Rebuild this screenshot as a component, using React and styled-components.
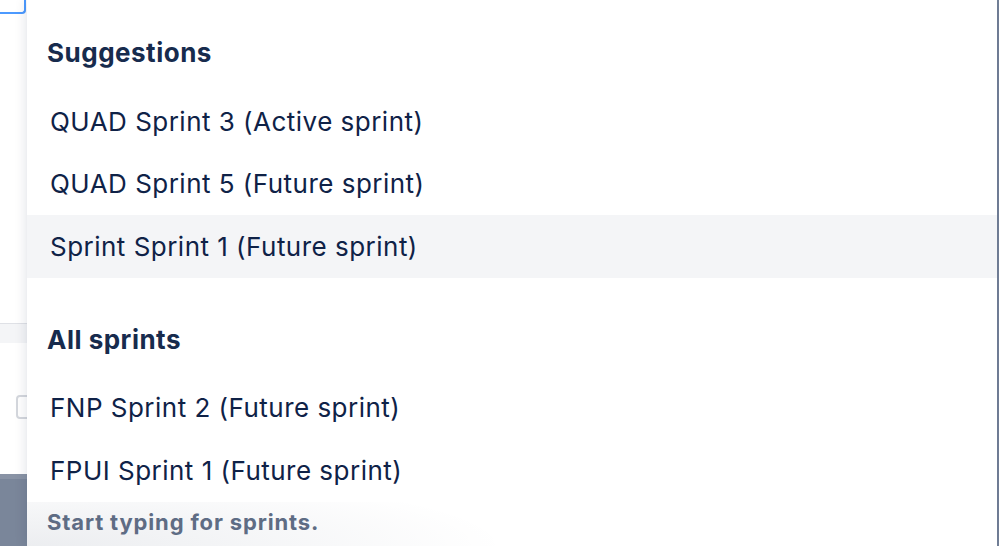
import React from 'react'
import styled, { createGlobalStyle, css } from 'styled-components'

const suggestions = [
  { label: 'QUAD Sprint 3 (Active sprint)' },
  { label: 'QUAD Sprint 5 (Future sprint)' },
  { label: 'Sprint Sprint 1 (Future sprint)', active: true }
]

const allSprints = [
  { label: 'FNP Sprint 2 (Future sprint)' },
  { label: 'FPUI Sprint 1 (Future sprint)' }
]

const App = () => (
  <Page>
    <GlobalStyle />
    <Backdrop>
      <InputEdge />
      <Divider />
      <Checkbox />
      <SlateBlock />
    </Backdrop>
    <Menu>
      <GroupHeading>Suggestions</GroupHeading>
      {suggestions.map(s => (
        <Option key={s.label} active={s.active}>{s.label}</Option>
      ))}
      <GroupHeading spaced>All sprints</GroupHeading>
      {allSprints.map(s => (
        <Option key={s.label}>{s.label}</Option>
      ))}
      <Footer>Start typing for sprints.</Footer>
    </Menu>
    <RightEdge />
  </Page>
)

export default App

const GlobalStyle = createGlobalStyle`
  html, body {
    margin: 0;
    padding: 0;
    background: #ffffff;
    overflow: hidden;
  }
`

const Page = styled.div`
  display: flex;
  width: 999px;
  height: 546px;
  overflow: hidden;
  font-family: Inter, "Liberation Sans", sans-serif;
  color: #172b4d;
`

const Backdrop = styled.div`
  width: 27px;
  flex-shrink: 0;
  display: flex;
  flex-direction: column;
  overflow: hidden;
  background: #ffffff;
`

const InputEdge = styled.div`
  width: 24px;
  height: 12px;
  border-right: 2px solid #4c9aff;
  border-bottom: 2px solid #4c9aff;
  border-bottom-right-radius: 4px;
`

const Divider = styled.div`
  margin-top: 309px;
  height: 19px;
  border-top: 1px solid #dfe1e6;
  background: #f4f5f7;
`

const Checkbox = styled.div`
  margin: 52px 0 0 16px;
  width: 20px;
  height: 20px;
  flex-shrink: 0;
  border: 2px solid #d4d7dd;
  border-radius: 4px;
`

const SlateBlock = styled.div`
  margin-top: 55px;
  flex: 1;
  border-top: 5px solid #8993a5;
  background: #7a869a;
`

const Menu = styled.div`
  position: relative;
  z-index: 1;
  flex: 1;
  display: flex;
  flex-direction: column;
  background: #ffffff;
  box-shadow: 0 0 12px rgba(9, 30, 66, 0.14);
`

const GroupHeading = styled.div`
  padding: 0 20px;
  margin-top: 36px;
  margin-bottom: 20px;
  height: 34px;
  line-height: 34px;
  font-size: 26px;
  letter-spacing: 0.5px;
  font-weight: 700;
  color: #172b4d;

  ${props => props.spaced && css`margin-top: 45px;`}
`

const Option = styled.div`
  height: 62.5px;
  flex-shrink: 0;
  display: flex;
  align-items: center;
  padding: 0 23px;
  font-size: 26px;
  letter-spacing: 0.48px;
  color: #0f2247;

  ${props => props.active && css`background: #f4f5f7;`}
`

const Footer = styled.div`
  flex: 1;
  padding: 7px 20px 0;
  line-height: 26px;
  font-size: 22px;
  letter-spacing: 0.85px;
  font-weight: 700;
  color: #5e6c84;
  background: radial-gradient(ellipse 480px 75px at 0% 100%, rgba(9, 30, 66, 0.08), rgba(9, 30, 66, 0) 100%);
`

const RightEdge = styled.div`
  width: 2px;
  flex-shrink: 0;
  background: #76839a;
`
